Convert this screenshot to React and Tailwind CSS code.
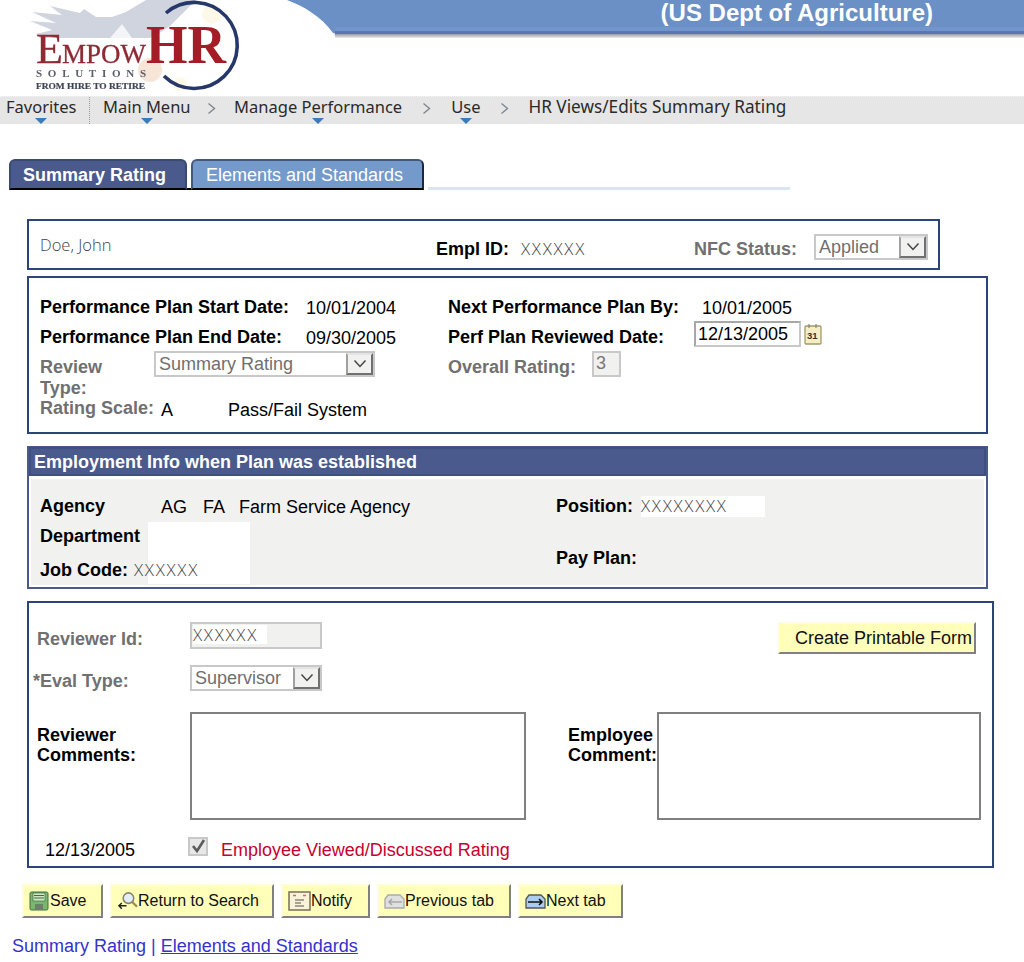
import React from "react";

const Logo = () => (
  <svg width="285" height="96" viewBox="0 0 285 96" className="block">
    <defs>
      <filter id="soft"><feGaussianBlur stdDeviation="0.45" /></filter>
    </defs>
    <g filter="url(#soft)">
      <path d="M146 0 L196 0 L186 10 L170 26 L158 34 L150 38 L40 38 L36 34 L52 30 L30 21 L56 23 L32 12 L62 15 L50 6 L80 13 L84 9 L96 17 L112 17 L126 12 Z" fill="#d0d4df" />
      <path d="M110 38 L122 24 L132 38 Z" fill="#f4f5f8" />
      <circle cx="150" cy="70" r="12" fill="#f7e6d8" />
      <circle cx="212" cy="14" r="10" fill="#fdf8e8" />
      <circle cx="180" cy="84" r="7" fill="#fdf8e8" />
      <path d="M166 13 A43 43 0 1 1 164 76" fill="none" stroke="#26376b" strokeWidth="3.6" />
      <text x="36" y="63" fill="#8f2a36" stroke="#8f2a36" strokeWidth=".3" fontFamily="'Liberation Serif',serif" fontSize="42" textLength="27" lengthAdjust="spacingAndGlyphs">E</text>
      <text x="62" y="63" fill="#8f2a36" stroke="#8f2a36" strokeWidth=".3" fontFamily="'Liberation Serif',serif" fontSize="27" textLength="84" lengthAdjust="spacingAndGlyphs">MPOW</text>
      <text x="146" y="63" fill="#a31d28" fontFamily="'Liberation Serif',serif" fontWeight="700" fontSize="54" textLength="80" lengthAdjust="spacingAndGlyphs">HR</text>
      <text x="36" y="77" fill="#5a5f6b" fontFamily="'Liberation Serif',serif" fontWeight="700" fontSize="11" textLength="110">SOLUTIONS</text>
      <text x="36" y="89" fill="#3f4554" stroke="#3f4554" strokeWidth=".2" fontFamily="'Liberation Serif',serif" fontWeight="700" fontSize="9" textLength="109" lengthAdjust="spacingAndGlyphs">FROM HIRE TO RETIRE</text>
    </g>
  </svg>
);

const Tri = () => <span className="absolute bottom-0 left-1/2 -translate-x-1/2 w-0 h-0 border-x-[6px] border-x-transparent border-t-[6px] border-t-[#3d7ab8]" />;

const NavItem = ({ children, className = "" }) => (
  <span className={`relative h-full flex items-start ${className}`}>{children}<Tri /></span>
);

const Chevron = ({ className = "" }) => (
  <svg width="9" height="13" viewBox="0 0 9 13" className={className}><path d="M1.5 1.5 L7.5 6.5 L1.5 11.5" fill="none" stroke="#7d8794" strokeWidth="1.4" /></svg>
);

const SelectBox = ({ value, w, btn = 29 }) => (
  <div className={`flex h-[26px] border-2 border-[#c8c8c8] bg-white ${w}`}>
    <span className="flex-1 pl-[3px] text-[18px] leading-[22px] text-[#6f6f6f]">{value}</span>
    <span className="h-full border-2 border-[#e4e4e4] border-l-[#a0a0a0] border-r-[#707070] border-b-[#707070] bg-[#f1f1ef] flex items-center justify-center" style={{ width: btn - 2 }}>
      <svg width="16" height="10" viewBox="0 0 16 10"><path d="M2.5 1.5 L8 7.5 L13.5 1.5" fill="none" stroke="#444" strokeWidth="1.5" /></svg>
    </span>
  </div>
);

const Xs = ({ children, className = "" }) => <span className={`text-[17px] tracking-[1.7px] text-[#444] font-light font-['Open_Sans',sans-serif] ${className}`}>{children}</span>;

const IconSave = () => (
  <svg width="21" height="20" viewBox="0 0 21 20"><rect x="1" y="1" width="18" height="18" rx="1.5" fill="#79b86c" stroke="#3f6f43" /><rect x="4" y="2" width="12" height="8" fill="#cfe6c4" stroke="#3f6f43" strokeWidth=".7" /><path d="M5 4.5h10M5 7h10" stroke="#3f6f43" /><rect x="6" y="13" width="8" height="6" fill="#6d7f6b" /></svg>
);
const IconSearch = () => (
  <svg width="21" height="20" viewBox="0 0 22 20"><circle cx="12" cy="7" r="5.5" fill="#e2eefa" stroke="#8a8266" strokeWidth="1.6" /><path d="M16 11l5 5" stroke="#a08a50" strokeWidth="2.4" /><path d="M10 15H2M5 12l-3 3 3 3" fill="none" stroke="#222" strokeWidth="1.5" /></svg>
);
const IconNotify = () => (
  <svg width="23" height="20" viewBox="0 0 23 20"><rect x="1" y="1" width="21" height="18" fill="#fbf3d8" stroke="#77705a" strokeWidth="1.5" /><path d="M5 4.5h3M15 4.5h3" stroke="#d96a6a" strokeWidth="1.4" /><path d="M7 9h9M7 12h6M7 15h9" stroke="#555" strokeWidth="1.2" /></svg>
);
const IconTab = ({ fill, stroke, arrow, dir }) => (
  <svg width="21" height="20" viewBox="0 0 21 20"><path d="M1 17V8l3-4h12l4 4v9z" fill={fill} stroke={stroke} strokeWidth="1.3" />{dir === "l" ? <path d="M18 11H5M8 8l-3 3 3 3" fill="none" stroke={arrow} strokeWidth="1.6" /> : <path d="M3 11h14M14 8l3 3-3 3" fill="none" stroke={arrow} strokeWidth="1.6" />}</svg>
);

const Btn = ({ icon, label, w }) => (
  <button className={`flex items-center h-[34px] ${w} bg-[#ffffb9] border-2 border-[#fdfcdc] border-r-[#808080] border-b-[#808080] pl-[5px] text-[16px] text-[#111]`}>
    {icon}<span>{label}</span>
  </button>
);

const navy = "border-2 border-[#2b4579]";
const label = "text-[18px] leading-[20px]";

export default function App() {
  return (
    <div className="w-[1024px] h-[962px] bg-white text-black overflow-hidden text-[18px] font-['Liberation_Sans',Arial,sans-serif]">
      {/* header */}
      <header className="flex h-[96px] items-start">
        <Logo />
        <svg width="50" height="38" viewBox="0 0 50 38" className="block shrink-0">
          <path d="M2 0 C18 6 36 16 48 33 L50 33 L50 0 Z" fill="#6b90c6" />
          <path d="M48 33 L50 33 L50 38 L52 38 Z" fill="#d8d8de" />
        </svg>
        <div className="flex-1 h-[38px] flex flex-col">
          <div className="h-[27px] bg-[#6b90c6] flex justify-end pr-[91px] text-white font-bold text-[24px] leading-[25px]">(US Dept of Agriculture)</div>
          <div className="h-[4px] bg-[#7096cb]" />
          <div className="h-[3px] bg-[#5c74b8]" />
          <div className="h-[4px] bg-gradient-to-b from-[#9a9aa8] to-[#ecebf0]" />
        </div>
      </header>

      {/* breadcrumb nav */}
      <nav className="h-[28px] bg-[#e6e6e6] flex items-stretch text-[#2a2a2a] text-[16.5px] leading-[20px] font-['Noto_Sans',Tahoma,sans-serif] border-t border-dotted border-[#f4f4f4]">
        <NavItem className="ml-[6px]">Favorites</NavItem>
        <span className="ml-[13px] mr-[12.5px] border-l border-dotted border-[#999]" />
        <NavItem>Main Menu</NavItem>
        <Chevron className="mt-[5px] ml-[16px] mr-[18.5px]" />
        <NavItem>Manage Performance</NavItem>
        <Chevron className="mt-[5px] ml-[20px] mr-[20px]" />
        <NavItem>Use</NavItem>
        <Chevron className="mt-[5px] ml-[20px] mr-[19px]" />
        <span className="text-[17.2px]">HR Views/Edits Summary Rating</span>
      </nav>

      {/* tabs */}
      <div className="mt-[35px] ml-[9px] h-[31px] flex items-end">
        <div className="w-[178px] h-[31px] rounded-t-[6px] bg-[#4a5a8c] border-t-2 border-x-2 border-[#3a4a70] border-b-2 border-b-black text-white font-bold text-[18px] leading-[28px] pl-[12px]">Summary Rating</div>
        <div className="w-[4px] h-[2px] bg-black" />
        <div className="w-[233px] h-[31px] rounded-t-[6px] bg-[#739acb] border-t-2 border-l-2 border-[#45597f] border-r-2 border-r-[#1c2740] border-b-2 border-b-black text-white text-[18px] leading-[28px] pl-[13px]">Elements and Standards</div>
        <div className="ml-[4px] w-[362px] h-[3px] bg-[#d9e5f3]" />
      </div>

      {/* Box 1 */}
      <section className={`mt-[29px] ml-[27px] w-[913px] h-[51px] ${navy} flex`}>
        <span className="ml-[11px] mt-[14px] text-[16.5px] leading-[20px] text-[#444] font-light font-['Open_Sans',sans-serif] w-[396px]">Doe, John</span>
        <b className={`mt-[18px] ${label} w-[85px]`}>Empl ID:</b>
        <Xs className="mt-[18px] leading-[20px] w-[173px]">XXXXXX</Xs>
        <b className={`mt-[18px] ${label} text-[#707070] w-[120px]`}>NFC Status:</b>
        <div className="mt-[13px]"><SelectBox value="Applied" w="w-[114px]" /></div>
      </section>

      {/* Box 2 */}
      <section className={`mt-[6px] ml-[27px] w-[961px] h-[158px] ${navy} pl-[11px] pt-[19px]`}>
        <div className="flex h-[30px]">
          <b className={`w-[266px] ${label}`}>Performance Plan Start Date:</b>
          <span className="w-[142px] leading-[22px]">10/01/2004</span>
          <b className={`w-[254px] ${label}`}>Next Performance Plan By:</b>
          <span className="leading-[22px]">10/01/2005</span>
        </div>
        <div className="flex h-[30px]">
          <b className={`w-[266px] ${label}`}>Performance Plan End Date:</b>
          <span className="w-[142px] leading-[22px]">09/30/2005</span>
          <b className={`w-[246px] ${label}`}>Perf Plan Reviewed Date:</b>
          <div className="-mt-[6px] w-[107px] h-[26px] border-2 border-[#a8a8a8] border-b-[#c8c8c8] border-r-[#c8c8c8] bg-white pl-[2px] leading-[22px]">12/13/2005</div>
          <svg width="20" height="22" viewBox="0 0 20 22" className="-mt-[4px] ml-[2px]"><rect x="2" y="3" width="16" height="18" rx="1" fill="#f7edc4" stroke="#a09a6a" strokeWidth="1.3" /><path d="M6 1v4M13 1v4" stroke="#777" /><text x="4" y="16" fontSize="9.5" fontWeight="700" fontFamily="'Liberation Sans',sans-serif" fill="#333">31</text></svg>
        </div>
        <div className="flex h-[44px]">
          <b className="w-[114px] text-[18px] leading-[21px] text-[#707070]">Review<br />Type:</b>
          <div className="w-[294px] -mt-[6px]"><SelectBox value="Summary Rating" w="w-[221px]" /></div>
          <b className={`w-[144px] ${label} text-[#707070]`}>Overall Rating:</b>
          <div className="-mt-[6px] w-[29px] h-[26px] border-2 border-[#c8c8c8] bg-[#f1f1ef] pl-[2px] text-[#777] leading-[20px]">3</div>
        </div>
        <div className="flex -mt-[3px]">
          <b className={`w-[121px] ${label} text-[#707070]`}>Rating Scale:</b>
          <span className="w-[67px] leading-[22px] mt-[1px]">A</span>
          <span className="leading-[22px] mt-[1px]">Pass/Fail System</span>
        </div>
      </section>

      {/* Box 3 */}
      <section className="mt-[12px] ml-[27px] w-[961px] h-[143px] border-2 border-[#4a5a8c]">
        <h2 className="h-[29px] bg-[#4a5a8c] border-2 border-[#3f4f80] text-white font-bold text-[18px] leading-[26px] pl-[3px] -mt-[1px]">Employment Info when Plan was established</h2>
        <div className="relative mt-[3px] mx-[2px] h-[106px] bg-[#f1f1ef]">
          <div className="absolute left-[117px] top-[43px] w-[102px] h-[62px] bg-white" />
          <div className="relative flex pt-[17px] pl-[9px] h-[45px]">
            <b className={`w-[121px] ${label}`}>Agency</b>
            <span className="w-[42px] leading-[22px]">AG</span>
            <span className="w-[36px] leading-[22px]">FA</span>
            <span className="w-[317px] leading-[22px]">Farm Service Agency</span>
            <b className={`w-[85px] ${label}`}>Position:</b>
            <span className="w-[124px] h-[21px] bg-white flex items-start"><Xs className="leading-[19px]">XXXXXXXX</Xs></span>
          </div>
          <div className="relative pl-[9px] pt-[2px] h-[36px]">
            <b className={`block ${label}`}>Department</b>
          </div>
          <div className="relative flex pl-[9px]">
            <b className={`w-[94px] ${label}`}>Job Code:</b>
            <Xs className="leading-[20px] w-[422px]">XXXXXX</Xs>
            <b className={`-mt-[12px] ${label}`}>Pay Plan:</b>
          </div>
        </div>
      </section>

      {/* Box 4 */}
      <section className={`mt-[12px] ml-[27px] w-[967px] h-[267px] ${navy}`}>
        <div className="flex pt-[19px] h-[62px]">
          <b className={`ml-[8px] w-[153px] mt-[7px] ${label} text-[#707070]`}>Reviewer Id:</b>
          <div className="w-[132px] h-[27px] border-2 border-[#c8c8c8] bg-[#f1f1ef] p-[1px]">
            <div className="w-[74px] h-[19px] bg-white leading-none"><Xs className="leading-[19px]">XXXXXX</Xs></div>
          </div>
          <button className="ml-[456px] w-[198px] h-[32px] bg-[#ffffb9] border-2 border-[#fdfcdc] border-r-[#808080] border-b-[#808080] text-[18px] text-[#111] pl-[15px] text-left leading-[20px]">Create Printable Form</button>
        </div>
        <div className="flex h-[47px]">
          <b className={`ml-[4px] w-[157px] mt-[6px] ${label} text-[#707070]`}>*Eval Type:</b>
          <div className="w-[132px] h-[27px]"><SelectBox value="Supervisor" w="w-[132px]" /></div>
        </div>
        <div className="flex h-[108px]">
          <b className={`ml-[8px] w-[153px] mt-[13px] ${label}`}>Reviewer<br />Comments:</b>
          <div className="w-[336px] h-[108px] border-2 border-[#808080] bg-white" />
          <b className={`ml-[42px] w-[89px] mt-[13px] ${label}`}>Employee<br />Comment:</b>
          <div className="w-[324px] h-[108px] border-2 border-[#808080] bg-white" />
        </div>
        <div className="flex mt-[17px]">
          <span className="ml-[16px] w-[143px] mt-[2px] leading-[22px]">12/13/2005</span>
          <span className="w-[20px] h-[19px] bg-[#c8c8c8] p-[2px]">
            <svg viewBox="0 0 16 15" className="block w-full h-full bg-[#e8e8e8]"><path d="M3 7l4 5 7-11" fill="none" stroke="#5c5c5c" strokeWidth="2.6" /></svg>
          </span>
          <span className="ml-[13px] mt-[2px] text-[#c8002d] leading-[22px]">Employee Viewed/Discussed Rating</span>
        </div>
      </section>

      {/* Buttons */}
      <div className="mt-[16px] ml-[22px] flex gap-[7px]">
        <Btn icon={<IconSave />} label="Save" w="w-[81px]" />
        <Btn icon={<IconSearch />} label="Return to Search" w="w-[164px]" />
        <Btn icon={<IconNotify />} label="Notify" w="w-[89px]" />
        <Btn icon={<IconTab fill="#e0e0e0" stroke="#aaa" arrow="#a8a8a8" dir="l" />} label="Previous tab" w="w-[134px]" />
        <Btn icon={<IconTab fill="#a8cdf0" stroke="#555" arrow="#111" dir="r" />} label="Next tab" w="w-[105px]" />
      </div>

      {/* Links */}
      <div className="mt-[17px] ml-[12px] text-[#3333cc] leading-[22px]">
        Summary Rating | <a className="underline" href="#">Elements and Standards</a>
      </div>
    </div>
  );
}
